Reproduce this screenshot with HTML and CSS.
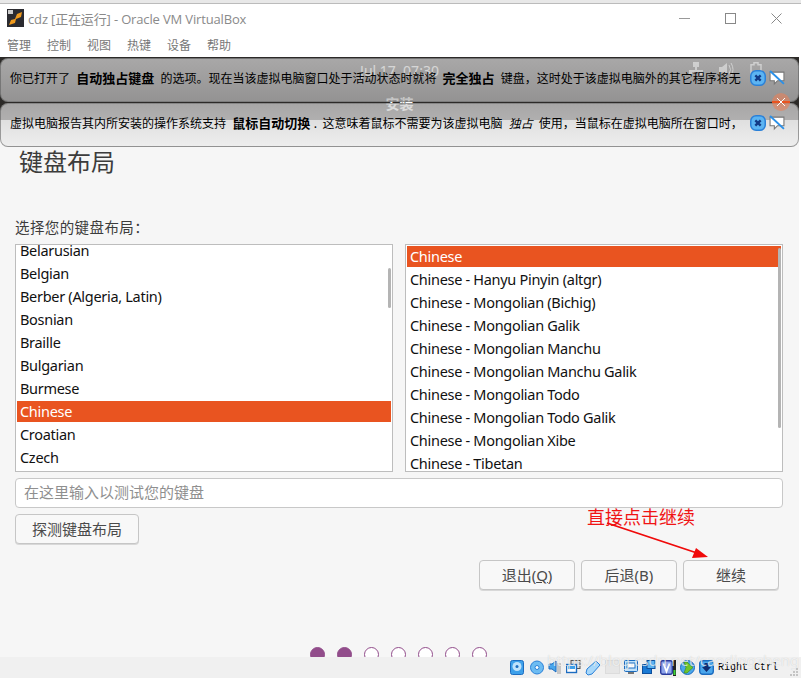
FILE: index.html
```html
<!DOCTYPE html>
<html lang="zh">
<head>
<meta charset="utf-8">
<title>cdz [正在运行] - Oracle VM VirtualBox</title>
<link rel="stylesheet" href="styles.css">
</head>
<body>
<div class="strip"></div>
<header class="titlebar">
  <svg class="appicon" width="17" height="18" viewBox="0 0 17 18"><rect width="17" height="18" fill="#2b2b30"/><rect x="1" y="1" width="5" height="4" fill="#ccc"/><path d="M2 16l2-5 4-1 2-5 5-2-1 5-5 2-1 4z" fill="#f09a1c"/></svg>
  <span class="wintitle">cdz [正在运行] - Oracle VM VirtualBox</span>
  <div class="winctl">
    <svg width="11" height="11" viewBox="0 0 11 11"><path d="M0 5.500h11" stroke="#999" fill="none"/></svg>
    <svg width="11" height="11" viewBox="0 0 11 11"><rect x=".5" y=".5" width="10" height="10" stroke="#888" fill="none"/></svg>
    <svg width="11" height="11" viewBox="0 0 11 11"><path d="M.5.5l10 10M10.500.5l-10 10" stroke="#888" fill="none"/></svg>
  </div>
</header>
<nav class="menubar"><span>管理</span><span>控制</span><span>视图</span><span>热键</span><span>设备</span><span>帮助</span></nav>
<main class="vm">
  <div class="topbar">
    <div class="clockrow">
      <span class="clock">Jul 17&nbsp; 07:30</span>
      <div class="tray">
        <svg width="14" height="14" viewBox="0 0 14 14"><path d="M4 0h6v5H8v3h6v5h-3v-3H3v3H0V8h6V5H4z" fill="#ddd"/></svg>
        <svg width="15" height="15" viewBox="0 0 15 15"><path d="M0 5h3l5-4v13L3 10H0z" fill="#ddd"/><path d="M10 3q3 4.500 0 9M12 1q4 6.500 0 13" stroke="#ddd" fill="none"/></svg>
        <svg width="12" height="16" viewBox="0 0 12 16"><path d="M4 .7h4v2h3v12.600H1V2.700h3z" fill="none" stroke="#ddd" stroke-width="1.500"/></svg>
      </div>
    </div>
    <div class="installtitle">安装</div>
  </div>
  <div class="installer">
    <h1 class="heading">键盘布局</h1>
    <div class="label">选择您的键盘布局：</div>
    <div class="lists">
      <div class="list">
        <ul class="rows rows-left">
          <li>Belarusian</li><li>Belgian</li><li>Berber (Algeria, Latin)</li><li>Bosnian</li><li>Braille</li><li>Bulgarian</li><li>Burmese</li><li class="sel">Chinese</li><li>Croatian</li><li>Czech</li>
        </ul>
        <div class="thumb thumb-left"></div>
      </div>
      <div class="list">
        <ul class="rows rows-right">
          <li class="sel">Chinese</li><li>Chinese - Hanyu Pinyin (altgr)</li><li>Chinese - Mongolian (Bichig)</li><li>Chinese - Mongolian Galik</li><li>Chinese - Mongolian Manchu</li><li>Chinese - Mongolian Manchu Galik</li><li>Chinese - Mongolian Todo</li><li>Chinese - Mongolian Todo Galik</li><li>Chinese - Mongolian Xibe</li><li>Chinese - Tibetan</li>
        </ul>
        <div class="thumb thumb-right"></div>
      </div>
    </div>
    <div class="testinput">在这里输入以测试您的键盘</div>
    <button class="btn btn-detect">探测键盘布局</button>
    <div class="navbtns">
      <button class="btn btn-nav">退出(<u>Q</u>)</button>
      <button class="btn btn-nav">后退(B)</button>
      <button class="btn btn-nav">继续</button>
    </div>
    <div class="dots"><i class="dot on"></i><i class="dot on"></i><i class="dot"></i><i class="dot"></i><i class="dot"></i><i class="dot"></i><i class="dot"></i></div>
  </div>

  <div class="banner banner-a">
    <p class="bannertext">你已打开了 <b>自动独占键盘</b> 的选项。现在当该虚拟电脑窗口处于活动状态时就将 <b>完全独占</b> 键盘，这时处于该虚拟电脑外的其它程序将无</p>
    <div class="bannericons">
      <svg width="16" height="16" viewBox="0 0 15 15"><rect x=".7" y=".7" width="13.600" height="13.600" rx="5" fill="#5cb4f2" stroke="#2a80d8" stroke-width="1.400"/><path d="M5 5l5 5M10 5l-5 5" stroke="#123a86" stroke-width="2.200"/></svg>
      <svg width="16" height="16" viewBox="0 0 15 15"><path d="M1 2h13v8H8l-3 3v-3H1z" fill="#fff" stroke="#777"/><path d="M1 1l13 12" stroke="#2a90e8" stroke-width="1.800"/></svg>
    </div>
  </div>
  <div class="banner banner-b">
    <p class="bannertext">虚拟电脑报告其内所安装的操作系统支持 <b>鼠标自动切换</b>. &nbsp;这意味着鼠标不需要为该虚拟电脑 <em>独占</em> 使用，当鼠标在虚拟电脑所在窗口时，</p>
    <div class="bannericons">
      <svg width="16" height="16" viewBox="0 0 15 15"><rect x=".7" y=".7" width="13.600" height="13.600" rx="5" fill="#5cb4f2" stroke="#2a80d8" stroke-width="1.400"/><path d="M5 5l5 5M10 5l-5 5" stroke="#123a86" stroke-width="2.200"/></svg>
      <svg width="16" height="16" viewBox="0 0 15 15"><path d="M1 2h13v8H8l-3 3v-3H1z" fill="#fff" stroke="#777"/><path d="M1 1l13 12" stroke="#2a90e8" stroke-width="1.800"/></svg>
    </div>
  </div>
  <div class="closeorb"><svg width="8" height="8" viewBox="0 0 8 8"><path d="M0 0l8 8M8 0L0 8" stroke="#fff"/></svg></div>

  <div class="note">直接点击继续</div>
  <svg class="arrow" width="105" height="40" viewBox="0 0 105 40"><path d="M2 2L92 32" stroke="#f00a0a" stroke-width="1.800" fill="none"/><path d="M103 36L87 37 91 27z" fill="#f00a0a"/></svg>
</main>
<footer class="statusbar">
  <svg width="14" height="15" viewBox="0 0 14 15"><rect x=".5" y=".5" width="13" height="14" rx="2" fill="#3da0ea" stroke="#1c6cc0"/><circle cx="7" cy="6.500" r="4.500" fill="#bfe2fb"/><circle cx="7" cy="6.500" r="1.500" fill="#1c6cc0"/></svg>
  <svg width="14" height="15" viewBox="0 0 14 15"><circle cx="7" cy="7.500" r="6.500" fill="#6dbcf2" stroke="#2a80d8"/><circle cx="7" cy="7.500" r="2" fill="#fff" stroke="#2a80d8"/></svg>
  <svg width="14" height="16" viewBox="0 0 14 16"><path d="M1 4h3l4-3v11L4 9H1z" fill="#4aa6ec" stroke="#1c6cc0"/><rect x="9" y="3" width="4" height="11" fill="#c6c6c6"/></svg>
  <svg width="15" height="14" viewBox="0 0 15 14"><rect x="5" y=".5" width="9" height="8" fill="#ddd" stroke="#555"/><rect x=".5" y="4.500" width="10" height="8" fill="#fff" stroke="#1c6cc0" stroke-width="1.400"/><rect x="2" y="6" width="7" height="3" fill="#3da0ea"/></svg>
  <svg width="16" height="16" viewBox="0 0 16 16"><path d="M11 1l4 4-8 9-4 1-2-2 1-4z" fill="#a8d8fa" stroke="#2a80d8"/></svg>
  <svg width="15" height="14" viewBox="0 0 15 14"><rect x=".5" y=".5" width="14" height="13" fill="#e6e6e6" stroke="#dcdcdc"/></svg>
  <svg width="14" height="14" viewBox="0 0 14 14"><rect x=".5" y=".5" width="13" height="11" rx="1" fill="#bfe2fb" stroke="#1c6cc0"/><rect x="3" y="3" width="8" height="5" fill="#fff" stroke="#1c6cc0"/><rect x="4" y="12" width="6" height="2" fill="#777"/></svg>
  <svg width="14" height="14" viewBox="0 0 14 14"><rect x=".5" y="4.500" width="9" height="9" fill="#1a7ad4" stroke="#0d4f9c"/><rect x="5" y=".5" width="8" height="8" fill="#5cb4f2" stroke="#0d4f9c"/></svg>
  <svg class="vicon" width="13" height="15" viewBox="0 0 13 15"><rect x=".7" y=".7" width="11.600" height="13.600" rx="2" fill="#8ea4ea" stroke="#2a3a9c" stroke-width="1.400"/><path d="M3.500 3.500L6.500 11.500 9.500 3.500" fill="none" stroke="#fff" stroke-width="1.800"/></svg>
  <svg class="meter" width="3" height="16" viewBox="0 0 3 16"><rect width="3" height="16" fill="#222"/><rect x=".5" y="10" width="2" height="5" fill="#3cd43c"/></svg>
  <svg width="15" height="15" viewBox="0 0 15 15"><circle cx="7.500" cy="7.500" r="7" fill="#4aa6ec" stroke="#1c6cc0"/><path d="M4 2h3l6 5.500-6 5.500H4l2-5.500z" fill="#6fc42c" stroke="#3c8a12" stroke-width=".6"/></svg>
  <svg width="15" height="15" viewBox="0 0 15 15"><rect x=".7" y=".7" width="13.600" height="13.600" rx="3" fill="#4aa6ec" stroke="#1c6cc0" stroke-width="1.400"/><path d="M5.500 3h4v4h2.500L7.500 12 3 7h2.500z" fill="#102c70"/></svg>
  <span class="hostkey">Right Ctrl</span>
  <span class="watermark">https://blog.csdn.net/caodingzheng</span>
  <svg class="grip" width="8" height="8" viewBox="0 0 8 8"><path d="M6 0h2v2H6zM3 3h2v2H3zM6 3h2v2H6zM0 6h2v2H0zM3 6h2v2H3zM6 6h2v2H6z" fill="#c4c4c4"/></svg>
</footer>
</body>
</html>
```
FILE: styles.css
```css
* { box-sizing: border-box; }
html, body { margin: 0; height: 100%; }
body {
  width: 801px;
  height: 678px;
  overflow: hidden;
  display: flex;
  flex-direction: column;
  background: #fff;
  font-family: "Noto Sans", "Noto Sans CJK SC", sans-serif;
}
.strip {
  height: 4px;
  background: #e8e8e8;
  border-bottom: 1px solid #bbb;
  flex: none;
}
.titlebar {
  height: 29px;
  flex: none;
  display: flex;
  align-items: center;
  padding: 0 0 1px 7px;
  background: #fff;
}
.appicon { flex: none; }
.wintitle {
  margin-left: 4px;
  font-size: 13px;
  letter-spacing: -.15px;
  color: #8a8a8a;
  white-space: nowrap;
  font-family: "Open Sans", "Noto Sans CJK SC", sans-serif;
}
.winctl {
  margin-left: auto;
  margin-right: 19px;
  display: flex;
  gap: 35px;
}
.menubar {
  height: 24px;
  flex: none;
  display: flex;
  align-items: center;
  gap: 16px;
  padding: 0 0 0 7px;
  font-size: 12px;
  color: #777;
  background: #fff;
}
.vm {
  flex: 1;
  position: relative;
  display: flex;
  flex-direction: column;
  min-height: 0;
  margin-right: 2px;
  background: #f6f6f6;
}
.topbar {
  height: 63px;
  flex: none;
  background: #2c2a28;
  color: #ddd;
  position: relative;
}
.clockrow {
  height: 26px;
  display: flex;
  justify-content: center;
  align-items: center;
  font-size: 14px;
}
.clock { color: #fff; }
.tray {
  position: absolute;
  top: 5px;
  right: 37px;
  display: flex;
  gap: 16px;
}
.installtitle {
  text-align: center;
  padding-top: 10px;
  font-size: 14px;
  font-weight: 700;
  color: #fff;
}
.installer {
  flex: 1;
  padding: 0 16px 0 15px;
  display: flex;
  flex-direction: column;
  min-height: 0;
  overflow: hidden;
}
.heading {
  margin: 25px 0 0 4px;
  height: 34px;
  line-height: 34px;
  font-size: 24px;
  font-weight: 400;
  color: #3c3c3c;
}
.label {
  margin-top: 38px;
  height: 20px;
  line-height: 20px;
  font-size: 14.500px;
  color: #3c3c3c;
  letter-spacing: .4px;
}
.lists {
  margin-top: 7px;
  display: flex;
  gap: 12px;
  height: 228px;
  flex: none;
}
.list {
  flex: 1;
  position: relative;
  overflow: hidden;
  background: #fff;
  border: 1px solid #bdbdbd;
}
.rows {
  list-style: none;
  margin: 0;
  padding: 0 1px;
  font-size: 14.500px;
  letter-spacing: -.3px;
  color: #111;
}
.rows li {
  height: 23px;
  line-height: 21px;
  padding-left: 3px;
  border-block: 1px solid transparent;
  background-clip: padding-box;
  white-space: nowrap;
}
.rows .sel {
  background-color: #e95420;
  color: #fff;
}
.rows-left { margin-top: -6px; }
.rows-right { margin-top: 0; }
.thumb {
  position: absolute;
  right: 1px;
  width: 3px;
  border-radius: 2px;
  background: #b4b4b4;
}
.thumb-left { top: 23px; height: 40px; }
.thumb-right { top: 3px; height: 180px; }
.testinput {
  margin-top: 6px;
  height: 30px;
  flex: none;
  line-height: 27px;
  padding-left: 8px;
  border: 1px solid #c8c8c8;
  border-radius: 4px;
  background: #fff;
  font-size: 15px;
  color: #8f8f8f;
}
.btn {
  font-family: inherit;
  font-size: 15px;
  color: #4a4a4a;
  background: #f8f8f8;
  border: 1px solid #c6c6c6;
  border-radius: 4px;
  box-shadow: 0 1px 0 #d8d8d8;
  padding: 0 0 2px;
}
.btn-detect {
  margin-top: 6px;
  width: 124px;
  height: 30px;
  flex: none;
}
.navbtns {
  margin-top: 16px;
  display: flex;
  justify-content: flex-end;
  gap: 6px;
  padding-right: 4px;
  flex: none;
}
.btn-nav { width: 96px; height: 30px; }
.dots {
  margin-top: 57px;
  display: flex;
  justify-content: center;
  gap: 12px;
  padding-right: 2px;
  flex: none;
}
.dot {
  width: 15px;
  height: 15px;
  border-radius: 50%;
  border: 1.500px solid #924d8b;
  background: #fff;
}
.dot.on { background: #924d8b; }
.banner {
  position: absolute;
  left: 0;
  right: 0;
  height: 44px;
  display: flex;
  align-items: flex-start;
  justify-content: space-between;
  border: 1px solid rgba(90, 90, 90, .55);
  border-radius: 8px;
  padding: 11px 13px 0 9px;
}
.banner-a { top: 1px; background: linear-gradient(rgba(206, 206, 206, .77), rgba(179, 179, 179, .77)); }
.banner-b { top: 46px; background: linear-gradient(rgba(205, 205, 205, .77), rgba(235, 235, 235, .77)); }
.bannertext {
  margin: 0;
  font-size: 12px;
  line-height: 16px;
  color: #000;
  white-space: nowrap;
  font-family: "Noto Sans CJK SC", sans-serif;
}
.bannertext b { font-size: 13px; margin: 0 3.500px; }
.bannertext em { margin: 0 3.500px; }
.bannericons {
  display: flex;
  gap: 3px;
  flex: none;
}
.closeorb {
  position: absolute;
  right: 9px;
  top: 36px;
  width: 18px;
  height: 18px;
  border-radius: 50%;
  background: rgba(233, 130, 90, .6);
  display: flex;
  align-items: center;
  justify-content: center;
}
.closeorb::before {
  content: "";
  position: absolute;
  left: 0;
  right: 0;
  top: 8px;
  height: 2px;
  background: #e95420;
}
.closeorb svg { position: relative; }
.note {
  position: absolute;
  left: 587px;
  top: 448px;
  font-size: 18px;
  line-height: 24px;
  color: #f01414;
  white-space: nowrap;
}
.arrow {
  position: absolute;
  left: 605px;
  top: 464px;
}
.statusbar {
  height: 21px;
  flex: none;
  position: relative;
  background: #f0f0f0;
  display: flex;
  align-items: flex-start;
  justify-content: flex-end;
  gap: 4px;
  padding: 3px 23px 0 0;
}
.statusbar > svg { flex: none; }
.statusbar > svg:first-child { margin-right: 2px; }
.vicon { margin-right: -4px; }
.hostkey {
  font-family: "Liberation Mono", "DejaVu Sans Mono", monospace;
  font-size: 10px;
  line-height: 14px;
  margin-top: 1px;
  color: #000;
  white-space: pre;
}
.watermark {
  position: absolute;
  left: 547px;
  top: -7px;
  font-size: 15px;
  line-height: 20px;
  color: rgba(255, 255, 255, .7);
  text-shadow: 0 0 1px rgba(0, 0, 0, .18);
  white-space: nowrap;
}
.grip {
  position: absolute;
  right: 3px;
  bottom: 2px;
}
```
